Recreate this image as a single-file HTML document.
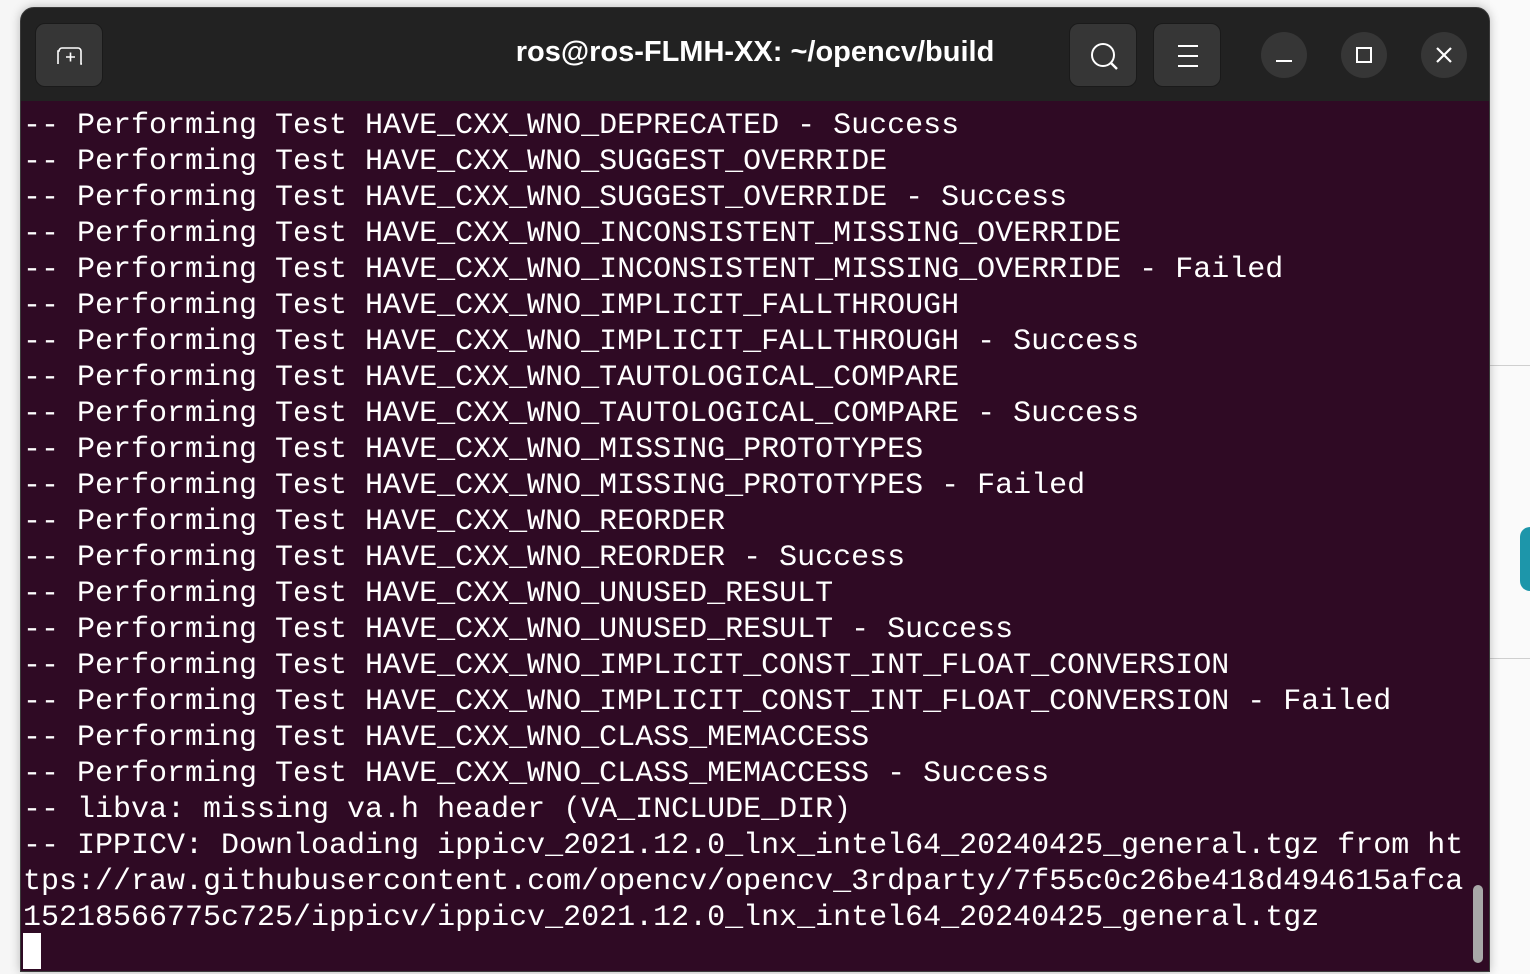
<!DOCTYPE html>
<html><head><meta charset="utf-8"><style>
html,body{margin:0;padding:0;width:1530px;height:974px;overflow:hidden;background:#f6f6f6;position:relative;font-family:"Liberation Sans",sans-serif}
.bgr{position:absolute;left:1490px;top:0;width:40px;height:974px;background:#fafafa}
.ln{position:absolute;height:1px;background:#cfcfcf;left:1490px;width:40px}
.win{position:absolute;left:20px;top:7px;width:1470px;height:965px;border-radius:14px 14px 0 0;background:#222;overflow:hidden;box-shadow:0 0 10px rgba(0,0,0,.25);border:1px solid #3a3a3a;box-sizing:border-box}
.term{position:absolute;left:0;top:93px;right:0;bottom:0;background:#2f0a24}
pre{margin:0;position:absolute;left:2px;top:7px;font-family:"Liberation Mono",monospace;font-size:30px;line-height:36px;color:#fff;letter-spacing:0}
.title{position:absolute;left:0;right:0;top:28px;text-align:center;color:#fff;font-weight:bold;font-size:29px}
.btn{position:absolute;top:15px;width:68px;height:64px;background:#363636;border-radius:10px;border:1px solid #1a1a1a;box-sizing:border-box}
.cb{position:absolute;top:24px;width:46px;height:46px;border-radius:50%;background:#363636}
.cur{position:absolute;left:2px;top:832px;width:18px;height:36px;background:#fff}
.sb{position:absolute;left:1452px;top:784px;width:10px;height:78px;border-radius:5px;background:#a8a8a8}
</style></head><body>
<div class="bgr"></div>
<div class="ln" style="top:365px"></div>
<div class="ln" style="top:658px"></div>
<div style="position:absolute;left:1520px;top:527px;width:20px;height:64px;border-radius:10px;background:#1d96aa"></div>
<div class="win">
<div class="btn" style="left:14px"><svg width="68" height="64" viewBox="0 0 68 64"><path d="M35 41v-13h1a3 3 0 0 1 3-3h16a3 3 0 0 1 3 3v13h1" transform="translate(-13,-1)" fill="none" stroke="#fff" stroke-width="1.6"/><path d="M34 34h9M38.5 29.5v9" transform="translate(-4,-1)" stroke="#fff" stroke-width="1.6"/></svg></div>
<div class="title">ros@ros-FLMH-XX: ~/opencv/build</div>
<div class="btn" style="left:1048px"><svg width="68" height="64" viewBox="0 0 68 64"><circle cx="33" cy="31" r="11" fill="none" stroke="#fff" stroke-width="2"/><path d="M41 39l6 6" stroke="#fff" stroke-width="2.4"/></svg></div>
<div class="btn" style="left:1132px"><svg width="68" height="64" viewBox="0 0 68 64"><path d="M24 22h20M24 32h20M24 42h20" stroke="#fff" stroke-width="2"/></svg></div>
<div class="cb" style="left:1240px"><svg width="46" height="46"><path d="M15 29h16" stroke="#fff" stroke-width="2"/></svg></div>
<div class="cb" style="left:1320px"><svg width="46" height="46"><rect x="16" y="16" width="14" height="14" fill="none" stroke="#fff" stroke-width="2"/></svg></div>
<div class="cb" style="left:1400px"><svg width="46" height="46"><path d="M16 16l14 14M30 16l-14 14" stroke="#fff" stroke-width="2.2"/></svg></div>
<div class="term">
<pre>-- Performing Test HAVE_CXX_WNO_DEPRECATED - Success
-- Performing Test HAVE_CXX_WNO_SUGGEST_OVERRIDE
-- Performing Test HAVE_CXX_WNO_SUGGEST_OVERRIDE - Success
-- Performing Test HAVE_CXX_WNO_INCONSISTENT_MISSING_OVERRIDE
-- Performing Test HAVE_CXX_WNO_INCONSISTENT_MISSING_OVERRIDE - Failed
-- Performing Test HAVE_CXX_WNO_IMPLICIT_FALLTHROUGH
-- Performing Test HAVE_CXX_WNO_IMPLICIT_FALLTHROUGH - Success
-- Performing Test HAVE_CXX_WNO_TAUTOLOGICAL_COMPARE
-- Performing Test HAVE_CXX_WNO_TAUTOLOGICAL_COMPARE - Success
-- Performing Test HAVE_CXX_WNO_MISSING_PROTOTYPES
-- Performing Test HAVE_CXX_WNO_MISSING_PROTOTYPES - Failed
-- Performing Test HAVE_CXX_WNO_REORDER
-- Performing Test HAVE_CXX_WNO_REORDER - Success
-- Performing Test HAVE_CXX_WNO_UNUSED_RESULT
-- Performing Test HAVE_CXX_WNO_UNUSED_RESULT - Success
-- Performing Test HAVE_CXX_WNO_IMPLICIT_CONST_INT_FLOAT_CONVERSION
-- Performing Test HAVE_CXX_WNO_IMPLICIT_CONST_INT_FLOAT_CONVERSION - Failed
-- Performing Test HAVE_CXX_WNO_CLASS_MEMACCESS
-- Performing Test HAVE_CXX_WNO_CLASS_MEMACCESS - Success
-- libva: missing va.h header (VA_INCLUDE_DIR)
-- IPPICV: Downloading ippicv_2021.12.0_lnx_intel64_20240425_general.tgz from ht
tps://raw.githubusercontent.com/opencv/opencv_3rdparty/7f55c0c26be418d494615afca
15218566775c725/ippicv/ippicv_2021.12.0_lnx_intel64_20240425_general.tgz</pre>
<div class="cur"></div>
<div class="sb"></div>
</div>
</div>
</body></html>
